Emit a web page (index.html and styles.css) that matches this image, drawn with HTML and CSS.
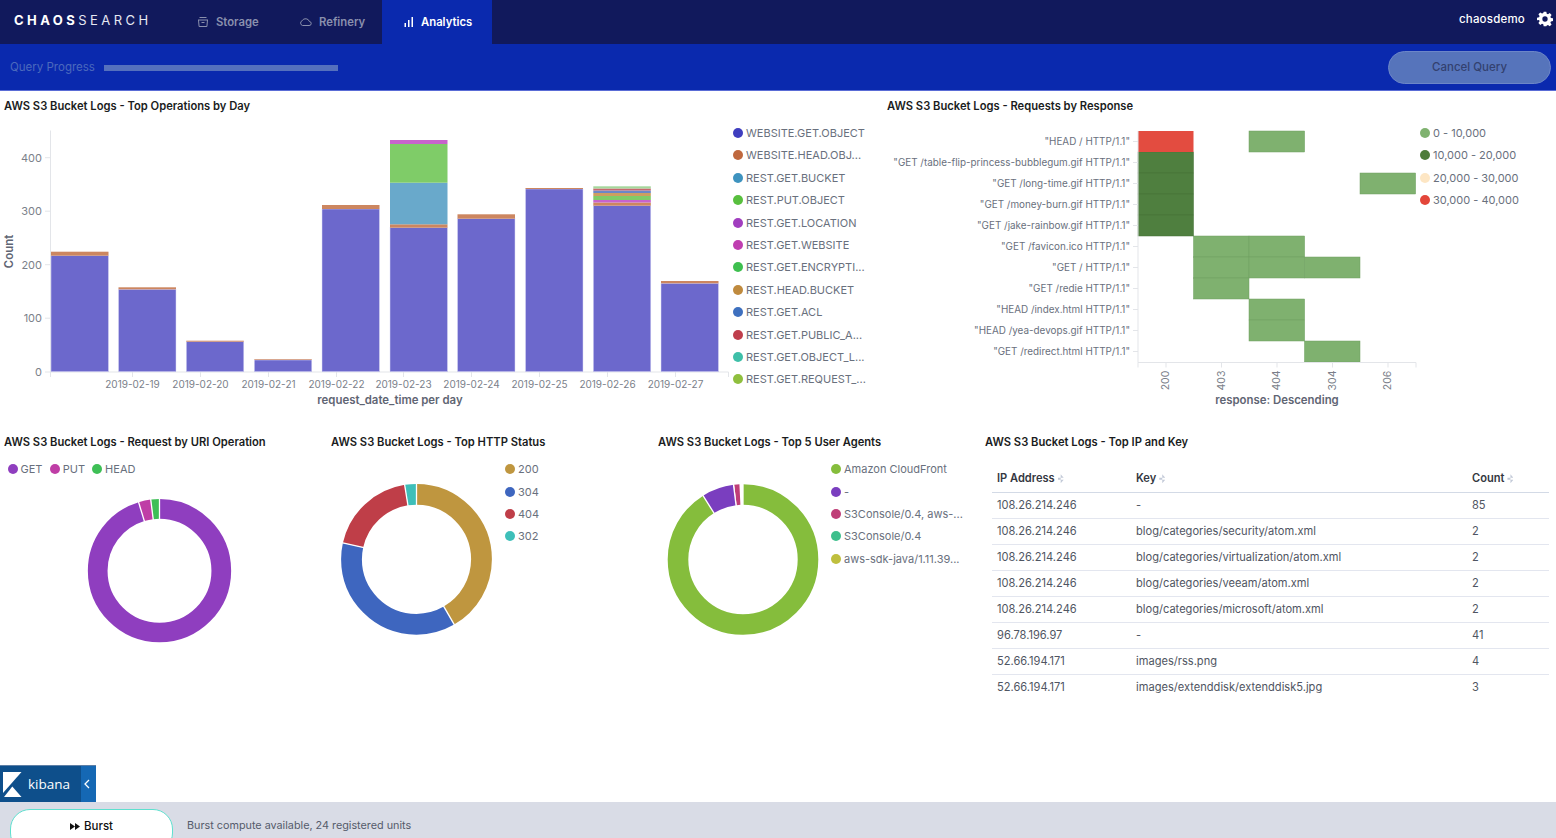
FILE: index.html
```html
<!DOCTYPE html>
<html lang="en">
<head>
<meta charset="utf-8">
<title>CHAOSSEARCH Analytics</title>
<link rel="stylesheet" href="styles.css">
</head>
<body>
<div class="app">
  <header class="topbar">
    <div class="brand"><b>CHAOS</b>SEARCH</div>
    <nav class="nav">
      <a class="nav-item nav-storage">
        <svg class="nav-icon" width="12" height="12" viewBox="0 0 12 12" fill="none" stroke="currentColor" stroke-width="1"><path d="M2.500 1.500h7M1 4h10M1.500 4l.6 6.500h7.800l.6-6.500M4.500 6.500h3"/></svg>
        <span>Storage</span>
      </a>
      <a class="nav-item nav-refinery">
        <svg class="nav-icon" width="13" height="10" viewBox="0 0 13 10" fill="none" stroke="currentColor" stroke-width="1"><path d="M3.500 8.500h6.500a2 2 0 0 0 .4-4A4 4 0 0 0 3.200 3.600 2.600 2.600 0 0 0 3.500 8.500z"/></svg>
        <span>Refinery</span>
      </a>
      <a class="nav-item nav-active">
        <svg class="nav-icon" width="10" height="10" viewBox="0 0 10 10" fill="currentColor"><rect x="0.500" y="6" width="1.500" height="4"/><rect x="4" y="3" width="1.500" height="7"/><rect x="7.500" y="0" width="1.500" height="10"/></svg>
        <span>Analytics</span>
      </a>
    </nav>
    <div class="user">
      <span>chaosdemo</span>
      <svg class="gear" width="16" height="16" viewBox="0 0 24 24" fill="currentColor"><path fill-rule="evenodd" d="M10 1h4l.6 3.100 1.900.8 2.600-1.800 2.800 2.800-1.800 2.600.8 1.900 3.100.6v4l-3.100.6-.8 1.900 1.800 2.600-2.800 2.800-2.600-1.800-1.900.8L14 23h-4l-.6-3.100-1.900-.8-2.600 1.800-2.800-2.800 1.800-2.600-.8-1.900L0 14v-4l3.100-.6.8-1.900L2.100 4.900l2.800-2.800 2.600 1.800 1.900-.8zM12 8a4 4 0 1 0 0 8 4 4 0 0 0 0-8z"/></svg>
    </div>
  </header>

  <section class="querybar">
    <span class="query-label">Query Progress</span>
    <div class="query-track"></div>
    <button class="cancel">Cancel Query</button>
  </section>

  <main class="dash">
    <div class="row-top">
      <section class="panel">
        <h2 class="panel-title">AWS S3 Bucket Logs - Top Operations by Day</h2>
        <div class="viz">
          <svg class="chart-bars" width="732" height="290" viewBox="0 119 732 290">
            <g class="axis">
              <path d="M50.500 130.500V372M50.500 372H728.500"/>
              <path d="M45 157.700h5.500M45 211.200h5.500M45 264.700h5.500M45 318.200h5.500M45 372h5.500M50.500 372v5M132.500 372v5M200.500 372v5M268.500 372v5M336.500 372v5M403.500 372v5M471.500 372v5M539.500 372v5M607.500 372v5M675.500 372v5M728.500 372v5"/>
            </g>
            <g class="tick-y">
              <text x="42" y="161.500">400</text><text x="42" y="215">300</text><text x="42" y="268.500">200</text><text x="42" y="322">100</text><text x="42" y="375.500">0</text>
            </g>
            <text class="axis-title" transform="translate(13 251.500) rotate(-90)">Count</text>
            <g class="tick-x">
              <text x="132.500" y="387.500">2019-02-19</text><text x="200.500" y="387.500">2019-02-20</text><text x="268.500" y="387.500">2019-02-21</text><text x="336.500" y="387.500">2019-02-22</text><text x="403.500" y="387.500">2019-02-23</text><text x="471.500" y="387.500">2019-02-24</text><text x="539.500" y="387.500">2019-02-25</text><text x="607.500" y="387.500">2019-02-26</text><text x="675.500" y="387.500">2019-02-27</text>
            </g>
            <text class="axis-title" x="390" y="404">request_date_time per day</text>
            <g class="bars">
              <rect class="s-pur" x="51" y="255.700" width="57.500" height="116"/><rect class="s-ora" x="51" y="251.700" width="57.500" height="4"/>
              <rect class="s-pur" x="118.500" y="289.300" width="57.500" height="82.400"/><rect class="s-ora" x="118.500" y="287.300" width="57.500" height="2"/>
              <rect class="s-pur" x="186.300" y="341.700" width="57.500" height="30"/><rect class="s-ora" x="186.300" y="340.700" width="57.500" height="1"/>
              <rect class="s-pur" x="254.300" y="360" width="57.500" height="11.700"/><rect class="s-ora" x="254.300" y="359.300" width="57.500" height="0.700"/>
              <rect class="s-pur" x="322" y="209" width="57.500" height="162.700"/><rect class="s-ora" x="322" y="205" width="57.500" height="4"/>
              <rect class="s-pur" x="390" y="227.700" width="57.500" height="144"/><rect class="s-ora" x="390" y="224.300" width="57.500" height="3.400"/><rect class="s-blu" x="390" y="182.700" width="57.500" height="41.600"/><rect class="s-grn" x="390" y="144" width="57.500" height="38.700"/><rect class="s-pnk" x="390" y="140" width="57.500" height="4"/>
              <rect class="s-pur" x="457.500" y="218.700" width="57.500" height="153"/><rect class="s-ora" x="457.500" y="214.300" width="57.500" height="4.400"/>
              <rect class="s-pur" x="525.500" y="189" width="57.500" height="182.700"/><rect class="s-ora" x="525.500" y="188" width="57.500" height="1"/>
              <rect class="s-pur" x="593.300" y="205.700" width="57.500" height="166"/>
              <rect class="s-ora" x="593.300" y="202.500" width="57.500" height="3.200"/><rect class="s-pnk" x="593.300" y="200" width="57.500" height="2.500"/><rect class="s-grn" x="593.300" y="196" width="57.500" height="4"/><rect class="s-gold" x="593.300" y="193" width="57.500" height="3"/><rect class="s-blu2" x="593.300" y="190.500" width="57.500" height="2.500"/><rect class="s-red" x="593.300" y="188.500" width="57.500" height="2"/><rect class="s-lgrn" x="593.300" y="186.300" width="57.500" height="2.200"/>
              <rect class="s-pur" x="661" y="283.300" width="57.500" height="88.400"/><rect class="s-ora" x="661" y="281" width="57.500" height="2.300"/>
            </g>
          </svg>
          <ul class="legend legend-bars">
            <li><i class="dot d1"></i>WEBSITE.GET.OBJECT</li>
            <li><i class="dot d2"></i>WEBSITE.HEAD.OBJ...</li>
            <li><i class="dot d3"></i>REST.GET.BUCKET</li>
            <li><i class="dot d4"></i>REST.PUT.OBJECT</li>
            <li><i class="dot d5"></i>REST.GET.LOCATION</li>
            <li><i class="dot d6"></i>REST.GET.WEBSITE</li>
            <li><i class="dot d7"></i>REST.GET.ENCRYPTI...</li>
            <li><i class="dot d8"></i>REST.HEAD.BUCKET</li>
            <li><i class="dot d9"></i>REST.GET.ACL</li>
            <li><i class="dot d10"></i>REST.GET.PUBLIC_A...</li>
            <li><i class="dot d11"></i>REST.GET.OBJECT_L...</li>
            <li><i class="dot d12"></i>REST.GET.REQUEST_...</li>
          </ul>
        </div>
      </section>

      <section class="panel">
        <h2 class="panel-title">AWS S3 Bucket Logs - Requests by Response</h2>
        <div class="viz">
          <svg class="chart-heat" width="531" height="290" viewBox="887 119 531 290">
            <g class="heat-light">
              <rect x="1249" y="131" width="55.600" height="21"/><rect x="1360" y="173" width="55.600" height="21"/>
              <rect x="1193.500" y="236" width="55.500" height="21"/><rect x="1249" y="236" width="55.600" height="21"/>
              <rect x="1193.500" y="257" width="55.500" height="21"/><rect x="1249" y="257" width="55.600" height="21"/><rect x="1304.500" y="257" width="55.500" height="21"/>
              <rect x="1193.500" y="278" width="55.500" height="21"/>
              <rect x="1249" y="299" width="55.600" height="21"/><rect x="1249" y="320" width="55.600" height="21"/>
              <rect x="1304.500" y="341" width="55.500" height="21"/>
            </g>
            <g class="heat-dark">
              <rect x="1138" y="152" width="55.500" height="21"/><rect x="1138" y="173" width="55.500" height="21"/><rect x="1138" y="194" width="55.500" height="21"/><rect x="1138" y="215" width="55.500" height="21"/>
            </g>
            <rect class="heat-red" x="1138" y="131" width="55.500" height="21"/>
            <g class="axis">
              <path d="M1138 131V362.500H1416"/>
              <path d="M1133 141.500h5M1133 162.500h5M1133 183.500h5M1133 204.500h5M1133 225.500h5M1133 246.500h5M1133 267.500h5M1133 288.500h5M1133 309.500h5M1133 330.500h5M1133 351.500h5M1138 362.500v5M1166 362.500v5M1221.500 362.500v5M1277 362.500v5M1332.500 362.500v5M1388 362.500v5M1416 362.500v5"/>
            </g>
            <g class="tick-row">
              <text x="1130" y="145">"HEAD / HTTP/1.1"</text>
              <text x="1130" y="166">"GET /table-flip-princess-bubblegum.gif HTTP/1.1"</text>
              <text x="1130" y="187">"GET /long-time.gif HTTP/1.1"</text>
              <text x="1130" y="208">"GET /money-burn.gif HTTP/1.1"</text>
              <text x="1130" y="229">"GET /jake-rainbow.gif HTTP/1.1"</text>
              <text x="1130" y="250">"GET /favicon.ico HTTP/1.1"</text>
              <text x="1130" y="271">"GET / HTTP/1.1"</text>
              <text x="1130" y="292">"GET /redie HTTP/1.1"</text>
              <text x="1130" y="313">"HEAD /index.html HTTP/1.1"</text>
              <text x="1130" y="334">"HEAD /yea-devops.gif HTTP/1.1"</text>
              <text x="1130" y="355">"GET /redirect.html HTTP/1.1"</text>
            </g>
            <g class="tick-rot">
              <text transform="translate(1169 380.500) rotate(-90)">200</text>
              <text transform="translate(1224.500 380.500) rotate(-90)">403</text>
              <text transform="translate(1280 380.500) rotate(-90)">404</text>
              <text transform="translate(1335.500 380.500) rotate(-90)">304</text>
              <text transform="translate(1391 380.500) rotate(-90)">206</text>
            </g>
            <text class="axis-title" x="1277" y="404">response: Descending</text>
          </svg>
          <ul class="legend legend-heat">
            <li><i class="dot h1"></i>0 - 10,000</li>
            <li><i class="dot h2"></i>10,000 - 20,000</li>
            <li><i class="dot h3"></i>20,000 - 30,000</li>
            <li><i class="dot h4"></i>30,000 - 40,000</li>
          </ul>
        </div>
      </section>
    </div>

    <div class="row-bottom">
      <section class="panel">
        <h2 class="panel-title">AWS S3 Bucket Logs - Request by URI Operation</h2>
        <div class="viz-col">
          <ul class="legend legend-inline">
            <li><i class="dot p1"></i>GET</li>
            <li><i class="dot p2"></i>PUT</li>
            <li><i class="dot p3"></i>HEAD</li>
          </ul>
          <svg class="donut" width="327" height="170" viewBox="0 479 327 170">
            <g fill="none" stroke-width="19.700">
              <circle class="r1" cx="159.500" cy="570.700" r="61.800" pathLength="360" stroke-dasharray="343 360" transform="rotate(-90 159.500 570.700)"/>
              <circle class="r2" cx="159.500" cy="570.700" r="61.800" pathLength="360" stroke-dasharray="10 360" stroke-dashoffset="-343" transform="rotate(-90 159.500 570.700)"/>
              <circle class="r3" cx="159.500" cy="570.700" r="61.800" pathLength="360" stroke-dasharray="7 360" stroke-dashoffset="-353" transform="rotate(-90 159.500 570.700)"/>
            </g>
            <g class="seps">
              <line x1="159.500" y1="570.700" x2="159.500" y2="497"/>
              <line x1="159.500" y1="570.700" x2="137.900" y2="500"/>
              <line x1="159.500" y1="570.700" x2="150.500" y2="497.500"/>
            </g>
          </svg>
        </div>
      </section>

      <section class="panel">
        <h2 class="panel-title">AWS S3 Bucket Logs - Top HTTP Status</h2>
        <div class="viz">
          <svg class="donut" width="178" height="190" viewBox="327 458 178 190">
            <g fill="none" stroke-width="20.800">
              <circle class="s1" cx="416.500" cy="559.300" r="65" pathLength="360" stroke-dasharray="150 360" transform="rotate(-90 416.500 559.300)"/>
              <circle class="s2" cx="416.500" cy="559.300" r="65" pathLength="360" stroke-dasharray="132.500 360" stroke-dashoffset="-150" transform="rotate(-90 416.500 559.300)"/>
              <circle class="s3" cx="416.500" cy="559.300" r="65" pathLength="360" stroke-dasharray="68.500 360" stroke-dashoffset="-282.500" transform="rotate(-90 416.500 559.300)"/>
              <circle class="s4" cx="416.500" cy="559.300" r="65" pathLength="360" stroke-dasharray="9 360" stroke-dashoffset="-351" transform="rotate(-90 416.500 559.300)"/>
            </g>
            <g class="seps">
              <line x1="416.500" y1="559.300" x2="416.500" y2="482"/>
              <line x1="416.500" y1="559.300" x2="456" y2="627.700"/>
              <line x1="416.500" y1="559.300" x2="339.400" y2="542.200"/>
              <line x1="416.500" y1="559.300" x2="404.100" y2="481.300"/>
            </g>
          </svg>
          <ul class="legend legend-status">
            <li><i class="dot q1"></i>200</li>
            <li><i class="dot q2"></i>304</li>
            <li><i class="dot q3"></i>404</li>
            <li><i class="dot q4"></i>302</li>
          </ul>
        </div>
      </section>

      <section class="panel">
        <h2 class="panel-title">AWS S3 Bucket Logs - Top 5 User Agents</h2>
        <div class="viz">
          <svg class="donut" width="177" height="190" viewBox="654 458 177 190">
            <g fill="none" stroke-width="20.600">
              <circle class="a1" cx="743" cy="559.500" r="65" pathLength="360" stroke-dasharray="328 360" transform="rotate(-90 743 559.500)"/>
              <circle class="a2" cx="743" cy="559.500" r="65" pathLength="360" stroke-dasharray="24.700 360" stroke-dashoffset="-328" transform="rotate(-90 743 559.500)"/>
              <circle class="a3" cx="743" cy="559.500" r="65" pathLength="360" stroke-dasharray="4 360" stroke-dashoffset="-353.200" transform="rotate(-90 743 559.500)"/>
            </g>
            <g class="seps">
              <line x1="743" y1="559.500" x2="743" y2="482"/>
              <line x1="743" y1="559.500" x2="701.300" y2="492.800"/>
              <line x1="743" y1="559.500" x2="733" y2="481"/>
            </g>
          </svg>
          <ul class="legend legend-status">
            <li><i class="dot a-d1"></i>Amazon CloudFront</li>
            <li><i class="dot a-d2"></i>-</li>
            <li><i class="dot a-d3"></i>S3Console/0.4, aws-...</li>
            <li><i class="dot a-d4"></i>S3Console/0.4</li>
            <li><i class="dot a-d5"></i>aws-sdk-java/1.11.39...</li>
          </ul>
        </div>
      </section>

      <section class="panel">
        <h2 class="panel-title">AWS S3 Bucket Logs - Top IP and Key</h2>
        <table class="data">
          <thead>
            <tr>
              <th class="c-ip">IP Address<span class="sort"></span></th>
              <th class="c-key">Key<span class="sort"></span></th>
              <th>Count<span class="sort"></span></th>
            </tr>
          </thead>
          <tbody>
            <tr><td>108.26.214.246</td><td>-</td><td>85</td></tr>
            <tr><td>108.26.214.246</td><td>blog/categories/security/atom.xml</td><td>2</td></tr>
            <tr><td>108.26.214.246</td><td>blog/categories/virtualization/atom.xml</td><td>2</td></tr>
            <tr><td>108.26.214.246</td><td>blog/categories/veeam/atom.xml</td><td>2</td></tr>
            <tr><td>108.26.214.246</td><td>blog/categories/microsoft/atom.xml</td><td>2</td></tr>
            <tr><td>96.78.196.97</td><td>-</td><td>41</td></tr>
            <tr><td>52.66.194.171</td><td>images/rss.png</td><td>4</td></tr>
            <tr><td>52.66.194.171</td><td>images/extenddisk/extenddisk5.jpg</td><td>3</td></tr>
          </tbody>
        </table>
      </section>
    </div>
  </main>

  <div class="kibana-tab">
    <div class="kibana-brand">
      <svg width="19" height="25" viewBox="0 0 19 25" fill="#fff"><path d="M0 0h18.500L0 21z"/><path d="M1 25l8.300-10.500L18.500 25z"/></svg>
      <span>kibana</span>
    </div>
    <div class="kibana-toggle">
      <svg width="6" height="10" viewBox="0 0 6 10" fill="none" stroke="#fff" stroke-width="1.300"><path d="M5 1L1 5l4 4"/></svg>
    </div>
  </div>

  <footer class="footer">
    <button class="burst"><span class="burst-glyph">
      <svg width="10" height="7" viewBox="0 0 10 7" fill="#111"><path d="M0 0l5 3.500L0 7zM5 0l5 3.500L5 7z"/></svg>
    </span>Burst</button>
    <span class="burst-info">Burst compute available, 24 registered units</span>
  </footer>
</div>
</body>
</html>
```

FILE: styles.css
```css
* { box-sizing: border-box; }
html, body { margin: 0; padding: 0; background: #fff; }
body { font-family: "Inter", "Liberation Sans", sans-serif; color: #343741; }

.app { width: 1556px; height: 838px; display: flex; flex-direction: column; overflow: hidden; }

/* top navigation */
.topbar { height: 44px; flex: none; display: flex; background: #11195c; color: #fff; }
.brand { width: 197px; padding: 13px 0 0 14px; font-size: 13px; line-height: 14px; letter-spacing: 3.450px; font-weight: 400; color: #e6e8f2; white-space: nowrap; }
.brand b { font-weight: 700; color: #fff; }
.nav { display: flex; height: 44px; }
.nav-item { display: flex; align-items: center; gap: 7px; font-size: 11.300px; font-weight: 600; color: #8a90ad; }
.nav-storage { width: 102px; }
.nav-refinery { width: 83px; }
.nav-active { width: 110px; padding-left: 22px; background: #0a29ae; color: #fff; font-weight: 600; }
.nav-icon { flex: none; }
.user { margin-left: auto; display: flex; align-items: center; height: 38px; padding-right: 3px; gap: 12px; font-size: 11.500px; font-weight: 500; letter-spacing: 0.200px; }

/* query bar */
.querybar { height: 47px; flex: none; display: flex; align-items: center; padding: 0 5px 0 10px; background: #0a29ae; border-bottom: 1px solid #5a6cd6; }
.query-label { font-size: 11.500px; color: #4c69bd; width: 94px; white-space: nowrap; }
.query-track { width: 234px; height: 6px; background: #5570bd; margin-top: 1px; }
.cancel { margin-left: auto; width: 163px; height: 33px; border-radius: 17px; border: 1px solid #6c86c8; background: #5674bb; color: #33416f; font: 500 11.500px "Inter", sans-serif; }

/* dashboard */
.dash { flex: 1; display: flex; flex-direction: column; min-height: 0; }
.row-top { height: 340px; flex: none; display: grid; grid-template-columns: 887px 1fr; padding-top: 5px; }
.row-bottom { flex: 1; display: grid; grid-template-columns: 327px 327px 327px 1fr; padding-top: 1px; }
.panel-title { margin: 0 0 3px; padding-left: 4px; font-size: 11.200px; line-height: 20px; font-weight: 600; color: #1a1c21; white-space: nowrap; }
.row-top .panel:last-child .panel-title { padding-left: 0; }
.row-bottom .panel-title { margin-bottom: 6px; }
.viz { display: flex; align-items: flex-start; }
.viz-col { display: flex; flex-direction: column; }
.chart-bars, .chart-heat, .donut { display: block; flex: none; }

/* chart text */
svg text { font-family: "Inter", "Liberation Sans", sans-serif; }
.axis path { fill: none; stroke: #e3e5e9; stroke-width: 1; }
.tick-y text { font-size: 11px; fill: #7b7f8a; text-anchor: end; }
.tick-x text { font-size: 10px; fill: #7b7f8a; text-anchor: middle; }
.tick-row text { font-size: 9.900px; fill: #69707d; text-anchor: end; }
.tick-rot text { font-size: 10.500px; fill: #7b7f8a; text-anchor: middle; }
.axis-title { font-size: 11.400px; font-weight: 600; fill: #5f6573; text-anchor: middle; }

/* bars */
.bars .s-pur { stroke: #dcdaf5; stroke-width: 0.500; }
.s-pur { fill: #6c68cc; }
.s-ora { fill: #cc8660; }
.s-blu { fill: #69a9cb; }
.s-grn { fill: #7fcc68; }
.s-pnk { fill: #c763cc; }
.s-gold { fill: #cc9f60; }
.s-blu2 { fill: #6a88c8; }
.s-red { fill: #c9656f; }
.s-lgrn { fill: #a5d79c; }

/* heatmap */
.heat-light rect { fill: #7fb16f; stroke: #6f9f60; stroke-width: 0.500; }
.heat-dark rect { fill: #4f7f3f; stroke: #457237; stroke-width: 0.500; }
.heat-red { fill: #e34c40; }

/* legends */
.legend { list-style: none; margin: 0; padding: 0; font-size: 11px; color: #69707d; }
.legend li { display: flex; align-items: center; height: 22.400px; white-space: nowrap; }
.dot { width: 10px; height: 10px; border-radius: 50%; margin-right: 3px; flex: none; }
.legend-bars { margin-left: 1px; padding-top: 2.800px; }
.legend-heat { margin-left: 2px; padding-top: 2.800px; }
.legend-inline { display: flex; height: 21px; padding-left: 7.500px; }
.legend-inline li { width: 42.300px; height: 21px; }

.d1 { background: #3f3ebf; } .d2 { background: #bf683e; } .d3 { background: #3e93bf; } .d4 { background: #58bf3e; }
.d5 { background: #a13ebf; } .d6 { background: #bf3eb0; } .d7 { background: #3ebf4f; } .d8 { background: #bf8a3e; }
.d9 { background: #3e70bf; } .d10 { background: #bf3e4c; } .d11 { background: #3ebfa8; } .d12 { background: #8fbf3e; }
.h1 { background: #7fb26f; } .h2 { background: #4e7c3a; } .h3 { background: #fde6c4; } .h4 { background: #e3463a; }
.p1 { background: #8f3ebf; } .p2 { background: #bf3ea6; } .p3 { background: #3ebf56; }
.q1 { background: #bf963f; } .q2 { background: #3e66bf; } .q3 { background: #bf3e48; } .q4 { background: #3ebfb9; }
.a-d1 { background: #85bd3c; } .a-d2 { background: #7a3ebf; } .a-d3 { background: #bf3e77; } .a-d4 { background: #3ebf8c; } .a-d5 { background: #bfbf3e; }

/* donuts */
.r1 { stroke: #8f3ebf; } .r2 { stroke: #bf3ea6; } .r3 { stroke: #3ebf56; }
.s1 { stroke: #bf963f; } .s2 { stroke: #3e66bf; } .s3 { stroke: #bf3e48; } .s4 { stroke: #3ebfb9; }
.a1 { stroke: #85bd3c; } .a2 { stroke: #7a3ebf; } .a3 { stroke: #bf3e77; }
.seps line { stroke: #fff; stroke-width: 1.300; }

/* table */
.data { margin: 13px 0 0 11px; width: 557px; border-collapse: collapse; table-layout: fixed; font-size: 11.100px; color: #4f5562; }
.data th, .data td { height: 26px; padding: 0 0 0 5px; text-align: left; border-bottom: 1px solid #e3e6ef; white-space: nowrap; }
.data th { height: 27px; font-weight: 600; color: #343741; border-bottom-color: #d3dae6; }
.data tbody tr:last-child td { border-bottom: none; }
.c-ip { width: 139px; }
.c-key { width: 336px; }
.sort { display: inline-block; width: 6px; height: 9px; margin-left: 3px; vertical-align: -1px; background: #c3cad8; clip-path: polygon(50% 0, 100% 40%, 0 40%, 0 60%, 100% 60%, 50% 100%); }

/* kibana tab */
.kibana-tab { height: 37px; flex: none; display: flex; width: 96px; background: #0e4f8b; border-top: 1px solid #5d7fa6; }
.kibana-brand { width: 81px; display: flex; align-items: center; padding-left: 3px; gap: 6px; color: #fff; font-family: "Open Sans", sans-serif; font-size: 13.500px; font-weight: 500; }
.kibana-toggle { flex: 1; background: #1568b4; display: flex; align-items: center; justify-content: center; padding-right: 4px; }

/* footer */
.footer { height: 36px; flex: none; display: flex; align-items: flex-start; padding: 7px 0 0 10px; background: #d9dce6; overflow: hidden; }
.burst { width: 163px; height: 44px; flex: none; border: 1px solid #5fe0cf; border-radius: 20px; background: #fff; color: #111; font: 500 11.500px "Inter", sans-serif; display: flex; justify-content: center; padding-top: 9px; gap: 4px; }
.burst-glyph { display: inline-flex; height: 14px; align-items: center; }
.burst-info { margin-left: 14px; line-height: 34px; font-size: 10.800px; color: #555b6b; white-space: nowrap; }
```
